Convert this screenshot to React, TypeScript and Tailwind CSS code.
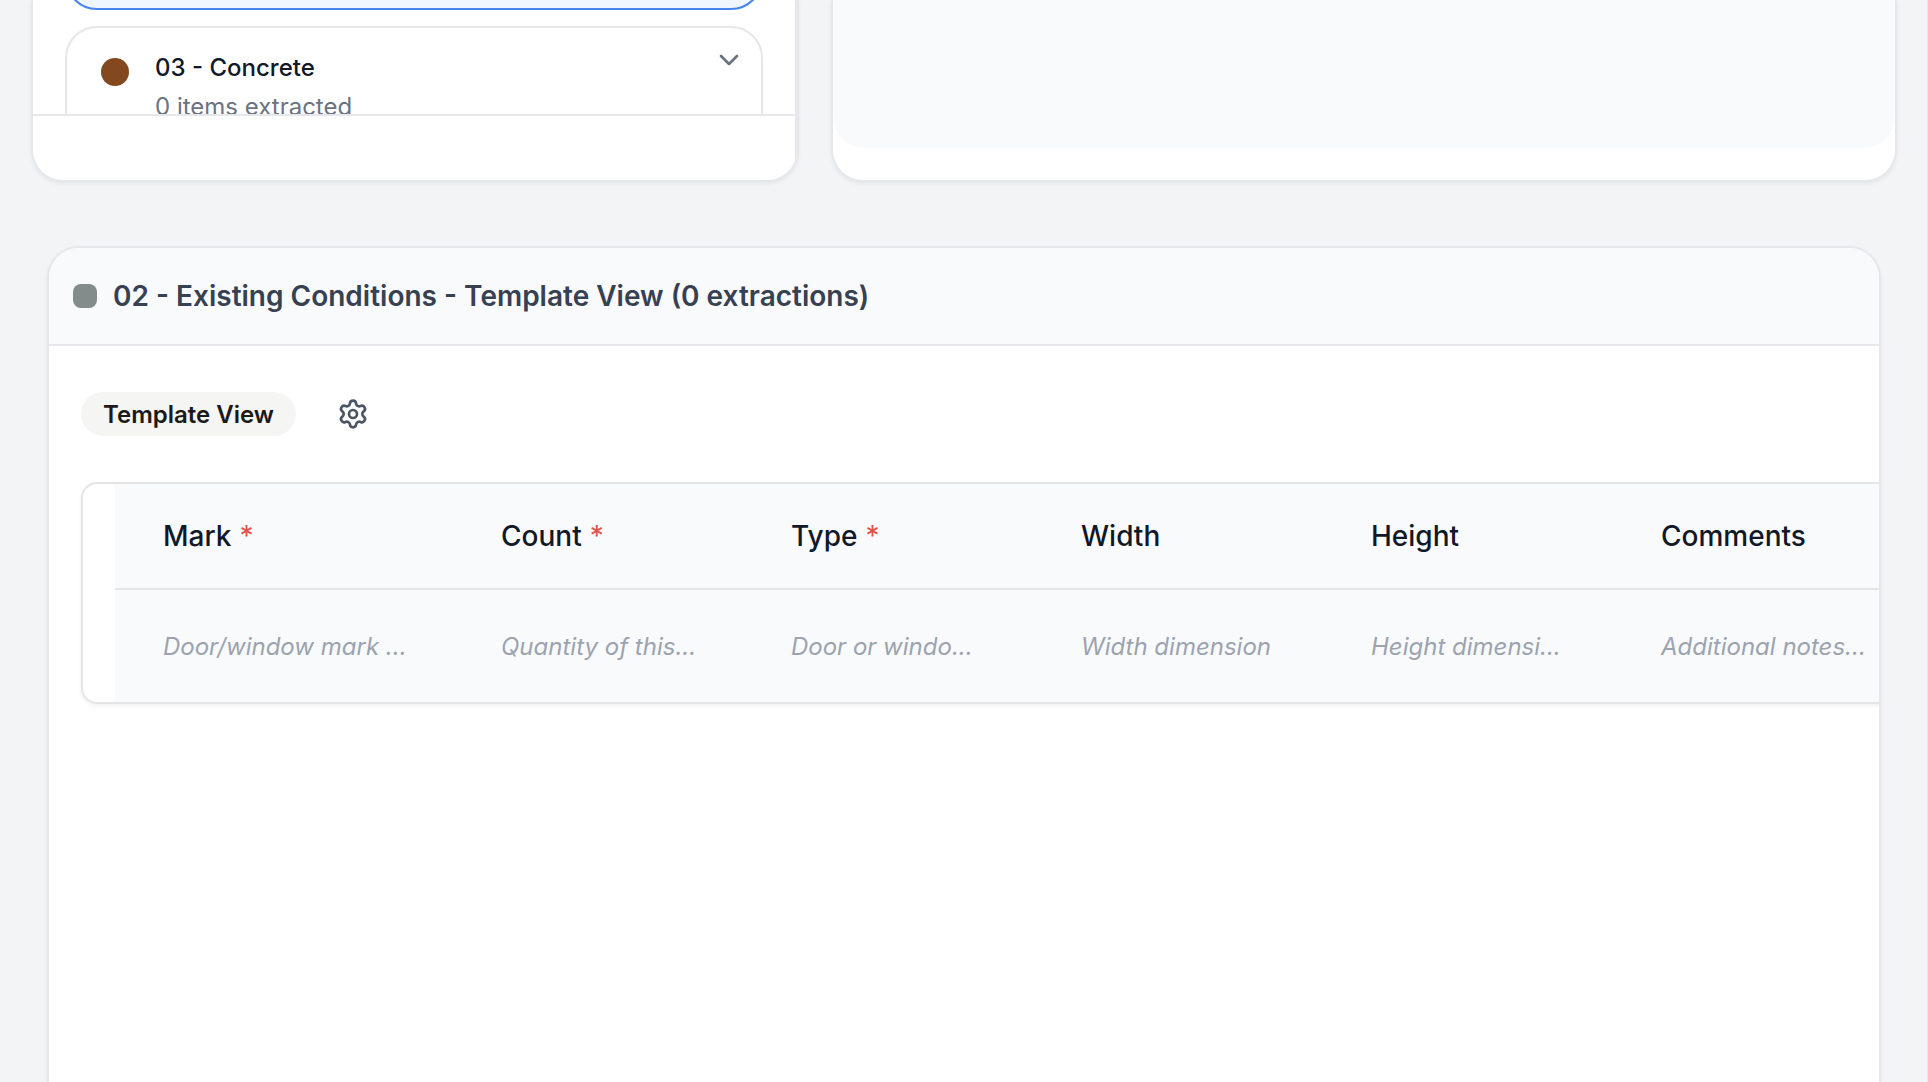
import { ChevronDown, Settings } from "lucide-react";

type Column = { name: string; required?: boolean; hint: string };

const columns: Column[] = [
  { name: "Mark", required: true, hint: "Door/window mark ..." },
  { name: "Count", required: true, hint: "Quantity of this..." },
  { name: "Type", required: true, hint: "Door or windo..." },
  { name: "Width", hint: "Width dimension" },
  { name: "Height", hint: "Height dimensi..." },
  { name: "Comments", hint: "Additional notes..." },
];

function DivisionList() {
  return (
    <section className="overflow-hidden rounded-b-[32px] border-2 border-t-0 border-gray-200 bg-white shadow-[0_2px_4px_rgba(0,0,0,0.06)]">
      <div className="border-r-2 border-gray-200">
        <div className="h-[114px] overflow-hidden px-8">
          <div className="-mt-[70px] h-20 rounded-[32px] border-2 border-[#4584ee] bg-[#eff6ff]" />
          <button
            type="button"
            className="mt-4 flex w-full items-start rounded-[32px] border-2 border-gray-200 bg-white pt-4 pr-4 pb-8 pl-[34px] text-left"
          >
            <span className="mt-[14px] size-7 shrink-0 rounded-full bg-[#84481f]" />
            <span className="ml-[26px] flex-1 pt-2">
              <span className="block text-2xl leading-8 font-medium text-[#111827]">03 - Concrete</span>
              <span className="mt-[7px] block text-2xl leading-8 text-[#6b7280]">0 items extracted</span>
            </span>
            <ChevronDown className="size-8 text-[#6b7280]" />
          </button>
        </div>
        <div className="h-[66px] border-t-2 border-gray-200" />
      </div>
    </section>
  );
}

function PreviewPanel() {
  return (
    <section className="overflow-hidden rounded-b-[32px] border-2 border-t-0 border-gray-200 bg-white shadow-[0_2px_4px_rgba(0,0,0,0.06)]">
      <div className="h-[148px] rounded-b-[32px] bg-[#f9fafc]" />
    </section>
  );
}

function TemplateTable() {
  return (
    <div className="w-max overflow-hidden rounded-2xl border-2 border-neutral-200 pl-8 shadow-[0_2px_4px_rgba(0,0,0,0.06)]">
      <table className="w-[1870px] table-fixed border-collapse bg-[#f9fafc] text-left">
        <colgroup>
          <col className="w-[338px]" />
          <col className="w-[290px]" />
          <col className="w-[290px]" />
          <col className="w-[290px]" />
          <col className="w-[290px]" />
          <col />
        </colgroup>
        <thead>
          <tr className="h-[105px] border-b-2 border-neutral-200">
            {columns.map((c) => (
              <th key={c.name} scope="col" className="px-12 text-[28px] leading-10 font-medium text-[#111827]">
                {c.name}
                {c.required && <span className="ml-2 font-normal text-[#e0524b]">*</span>}
              </th>
            ))}
          </tr>
        </thead>
        <tbody>
          <tr className="h-[113px]">
            {columns.map((c) => (
              <td key={c.name} className="pt-[2px] pl-12 text-2xl whitespace-nowrap text-[#9ca3af] italic">
                {c.hint}
              </td>
            ))}
          </tr>
        </tbody>
      </table>
    </div>
  );
}

export default function App() {
  return (
    <main className="flex h-screen flex-col overflow-hidden border-r border-gray-200 bg-[#f3f4f6] font-['Inter',sans-serif]">
      <div className="grid grid-cols-[768fr_1066fr] gap-x-8 pr-[30px] pl-[31px]">
        <DivisionList />
        <PreviewPanel />
      </div>
      <section className="mt-16 mr-[46px] ml-[47px] flex-1 overflow-hidden rounded-t-[32px] border-2 border-b-0 border-gray-200 bg-white shadow-[0_2px_4px_rgba(0,0,0,0.06)]">
        <header className="flex h-[98px] items-center gap-4 border-b-2 border-gray-200 bg-[#f9fafc] px-6">
          <span className="size-6 rounded-lg bg-[#828c8b]" />
          <h2 className="text-[28px] leading-10 font-semibold text-[#374151]">
            02 - Existing Conditions - Template View (0 extractions)
          </h2>
        </header>
        <div className="pt-8 pl-8">
          <div className="mb-8 flex items-center gap-[35px] py-[14px]">
            <span className="flex h-11 items-center rounded-full bg-[#f5f5f4] px-[22px] pt-[2px] text-2xl font-semibold text-[#1c1917]">
              Template View
            </span>
            <button type="button" aria-label="Template settings" className="flex size-11 items-center justify-center text-[#4b5563]">
              <Settings className="size-8" />
            </button>
          </div>
          <TemplateTable />
        </div>
      </section>
    </main>
  );
}
